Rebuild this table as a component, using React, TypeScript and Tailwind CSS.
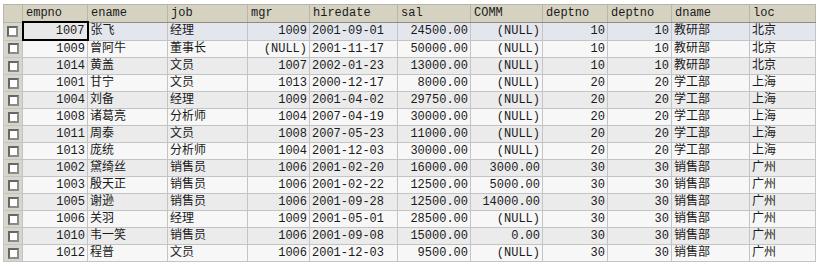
const COLS = [
  { key: 'empno', label: 'empno', w: 'w-[65px]', right: true },
  { key: 'ename', label: 'ename', w: 'w-[80px]' },
  { key: 'job', label: 'job', w: 'w-[80px]' },
  { key: 'mgr', label: 'mgr', w: 'w-[62px]', right: true },
  { key: 'hiredate', label: 'hiredate', w: 'w-[88px]' },
  { key: 'sal', label: 'sal', w: 'w-[73px]', right: true },
  { key: 'comm', label: 'COMM', w: 'w-[72px]', right: true },
  { key: 'deptno', label: 'deptno', w: 'w-[65px]', right: true },
  { key: 'deptno2', label: 'deptno', w: 'w-[64px]', right: true },
  { key: 'dname', label: 'dname', w: 'w-[78px]' },
  { key: 'loc', label: 'loc', w: 'w-[66px]' },
];

const ROWS: string[][] = [
  ['1007', '张飞', '经理', '1009', '2001-09-01', '24500.00', '(NULL)', '10', '10', '教研部', '北京'],
  ['1009', '曾阿牛', '董事长', '(NULL)', '2001-11-17', '50000.00', '(NULL)', '10', '10', '教研部', '北京'],
  ['1014', '黄盖', '文员', '1007', '2002-01-23', '13000.00', '(NULL)', '10', '10', '教研部', '北京'],
  ['1001', '甘宁', '文员', '1013', '2000-12-17', '8000.00', '(NULL)', '20', '20', '学工部', '上海'],
  ['1004', '刘备', '经理', '1009', '2001-04-02', '29750.00', '(NULL)', '20', '20', '学工部', '上海'],
  ['1008', '诸葛亮', '分析师', '1004', '2007-04-19', '30000.00', '(NULL)', '20', '20', '学工部', '上海'],
  ['1011', '周泰', '文员', '1008', '2007-05-23', '11000.00', '(NULL)', '20', '20', '学工部', '上海'],
  ['1013', '庞统', '分析师', '1004', '2001-12-03', '30000.00', '(NULL)', '20', '20', '学工部', '上海'],
  ['1002', '黛绮丝', '销售员', '1006', '2001-02-20', '16000.00', '3000.00', '30', '30', '销售部', '广州'],
  ['1003', '殷天正', '销售员', '1006', '2001-02-22', '12500.00', '5000.00', '30', '30', '销售部', '广州'],
  ['1005', '谢逊', '销售员', '1006', '2001-09-28', '12500.00', '14000.00', '30', '30', '销售部', '广州'],
  ['1006', '关羽', '经理', '1009', '2001-05-01', '28500.00', '(NULL)', '30', '30', '销售部', '广州'],
  ['1010', '韦一笑', '销售员', '1006', '2001-09-08', '15000.00', '0.00', '30', '30', '销售部', '广州'],
  ['1012', '程普', '文员', '1006', '2001-12-03', '9500.00', '(NULL)', '30', '30', '销售部', '广州'],
];

export default function App() {
  return (
    <div
      className="w-[819px] h-[265px] bg-white pt-[4px] pl-[3px] text-[12px] text-[#1a1a1a]"
      style={{ fontFamily: '"Liberation Mono", "Noto Sans CJK SC", monospace' }}
    >
      <table className="table-fixed border-collapse">
        <colgroup>
          <col className="w-[19px]" />
          {COLS.map((c) => (
            <col key={c.key} className={c.w} />
          ))}
        </colgroup>
        <thead>
          <tr className="h-[17px] bg-[#d6d2c2]">
            <th className="border border-[#b9b6a9] p-0" />
            {COLS.map((c) => (
              <th
                key={c.key}
                className="border border-[#b9b6a9] border-b-[#8f8c80] px-[3px] py-0 text-left font-normal leading-[16px] whitespace-nowrap overflow-hidden"
              >
                {c.label}
              </th>
            ))}
          </tr>
        </thead>
        <tbody>
          {ROWS.map((row, i) => {
            const selected = i === 0;
            const bg = selected ? 'bg-[#e4e6ee]' : i % 2 === 1 ? 'bg-[#f7f7f7]' : 'bg-[#ebebeb]';
            return (
              <tr key={i} className={`h-[17px] ${bg}`}>
                <td className="border border-[#c4c4c4] bg-[#d8d5cc] p-0">
                  <div className="flex justify-center">
                    <span className="block w-[11px] h-[11px] bg-white border-2 border-[#666] border-r-[#8a8a8a] border-b-[#8a8a8a]" />
                  </div>
                </td>
                {row.map((v, j) => {
                  const col = COLS[j];
                  const focus = selected && j === 0;
                  return (
                    <td
                      key={j}
                      className={`border px-[2px] py-0 leading-[16px] whitespace-nowrap overflow-hidden ${
                        focus ? 'border-2 border-black bg-[#e8e8e8]' : 'border-[#c4c4c4]'
                      } ${col.right ? 'text-right' : 'text-left'}`}
                    >
                      {v}
                    </td>
                  );
                })}
              </tr>
            );
          })}
        </tbody>
      </table>
    </div>
  );
}
